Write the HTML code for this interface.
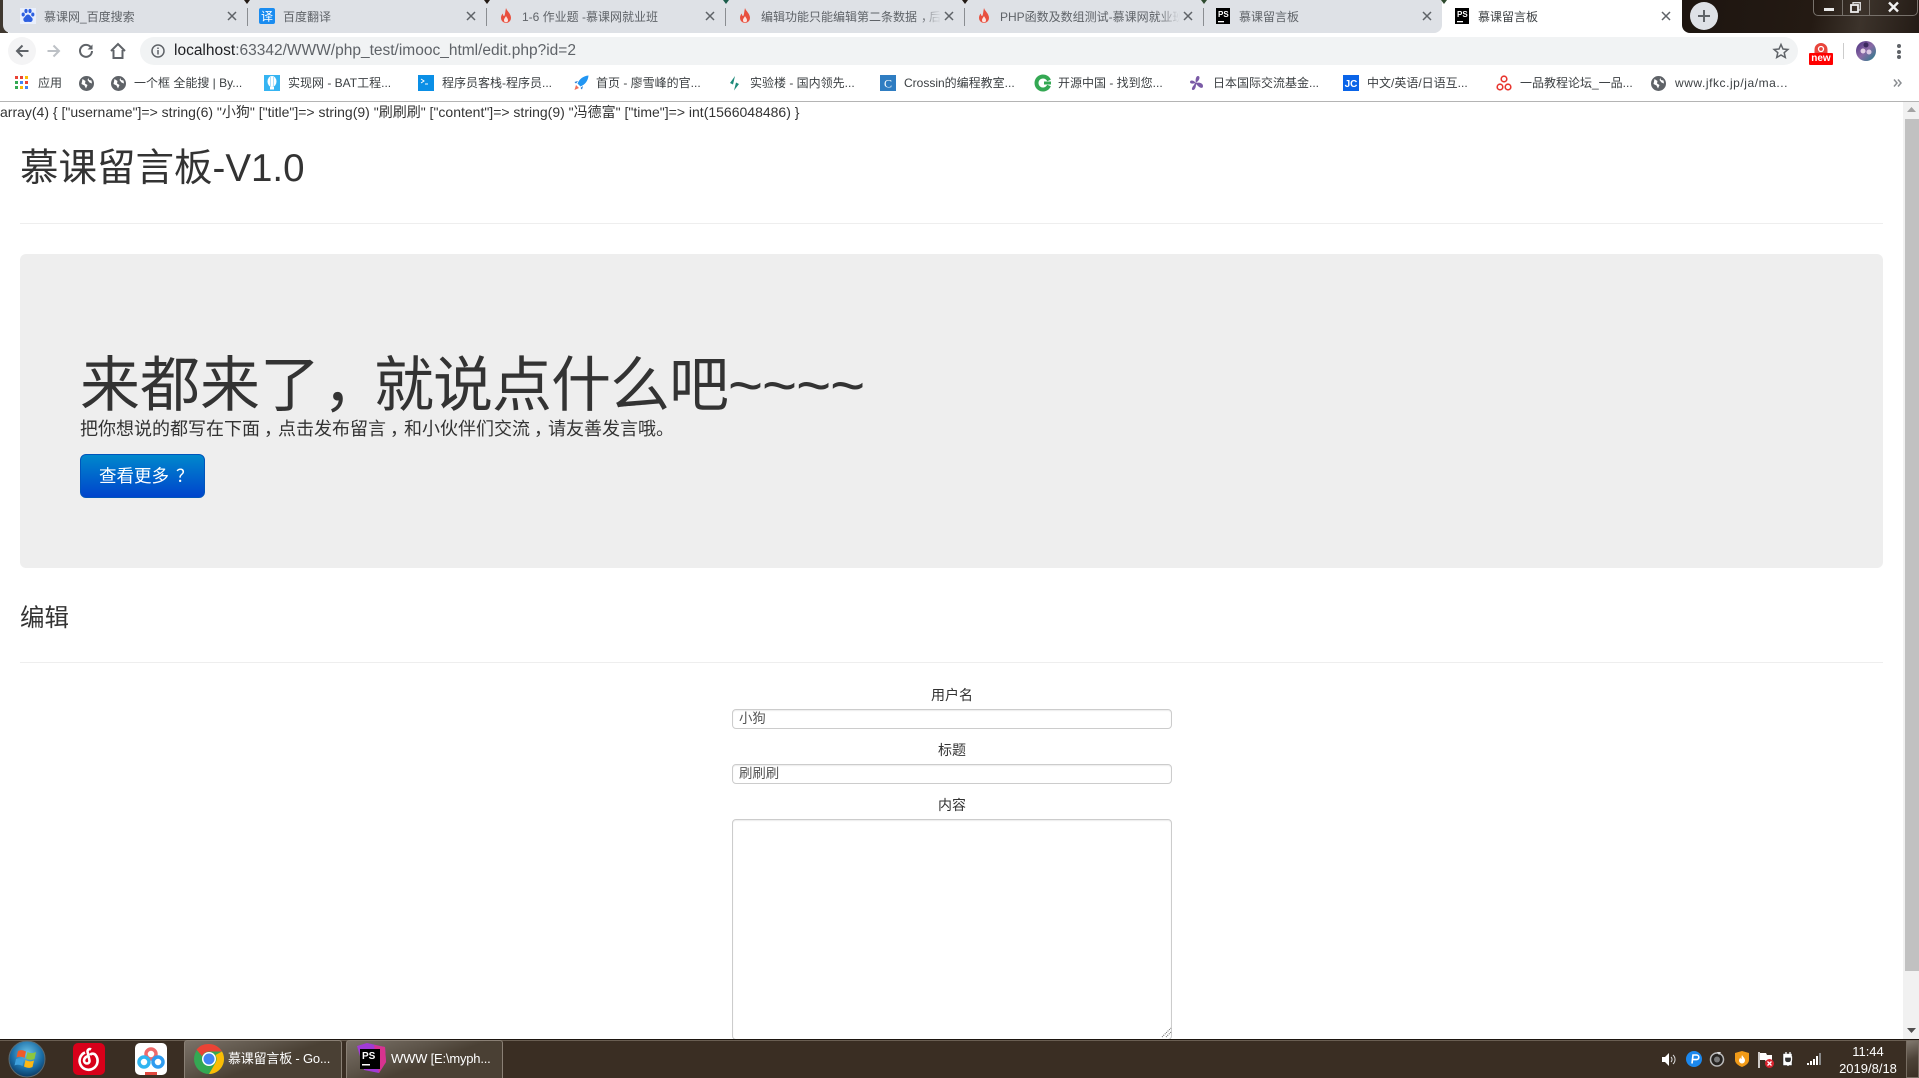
<!DOCTYPE html>
<html lang="zh-CN">
<head>
<meta charset="utf-8">
<title>慕课留言板</title>
<style>
html,body{margin:0;padding:0;width:1919px;height:1078px;overflow:hidden;background:#fff}
body{position:relative;font-family:"Liberation Sans","Noto Sans CJK SC",sans-serif;color:#333}
.a{position:absolute}
.t{position:absolute;white-space:nowrap}
svg{position:absolute;display:block;overflow:visible}
.tab{font-size:12px;color:#5f6368;line-height:16px;top:9px}
.sep{position:absolute;top:8px;width:1px;height:18px;background:#8a8d91}
.tick{position:absolute;top:0;width:0;height:0;border-left:3px solid transparent;border-right:3px solid transparent;border-top:4px solid #221a14}
.bm{font-size:12px;color:#3c4043;line-height:16px;top:75px}
.lab{position:absolute;left:732px;width:440px;text-align:center;font-size:14px;line-height:20px;color:#333}
.inp{position:absolute;left:732px;width:438px;height:18px;border:1px solid #ccc;border-radius:4px;background:#fff;box-shadow:inset 0 1px 1px rgba(0,0,0,.075);font-size:13.400px;line-height:18px;color:#555;text-indent:6px}
.c{position:relative;left:4px}
</style>
</head>
<body>

<!-- Frame / tab strip -->
<div class="a" style="left:0;top:0;width:1919px;height:33px;background:#fff"></div>
<div class="a" style="left:0;top:0;width:8px;height:33px;background:#3f3830"></div>
<div class="a" style="left:3px;top:0;width:1439px;height:33px;background:#dee1e6;border-radius:0 0 8px 8px"></div>
<div class="a" style="left:1442px;top:0;width:240px;height:33px;background:#fff;border-radius:8px 8px 0 0"></div>
<div class="a" style="left:1682px;top:0;width:237px;height:33px;border-radius:0 0 0 8px;background:linear-gradient(100deg,#1d1510 0%,#241a13 55%,#3c332b 75%,#241b15 100%)"></div>

<div class="tick" style="left:244px"></div>
<div class="tick" style="left:484px"></div>
<div class="tick" style="left:723px;border-top-color:#1a5c4a"></div>
<div class="tick" style="left:962px"></div>
<div class="tick" style="left:1201px;border-top-color:#2e4a2e"></div>
<div class="tick" style="left:1441px;border-top-color:#2e4a2e"></div>

<svg style="left:20px;top:8px" width="16" height="16" viewBox="0 0 16 16"><rect width="16" height="16" fill="#e9effc"/><g fill="#2d5fe0"><ellipse cx="3.200" cy="6.500" rx="1.600" ry="2"/><ellipse cx="6" cy="3" rx="1.600" ry="2.100"/><ellipse cx="10" cy="3" rx="1.600" ry="2.100"/><ellipse cx="12.800" cy="6.500" rx="1.600" ry="2"/><path d="M8 6.500c-2 0-2.400 2-4 3.300C2.700 11 3.300 14.300 6 14c1.300-.1 2.700-.1 4 0 2.700.3 3.300-3 2-4.200C10.400 8.500 10 6.500 8 6.500z"/></g></svg>
<div class="t tab" style="left:44px">慕课网_百度搜索</div>
<svg style="left:227px;top:11px" width="10" height="10" viewBox="0 0 10 10"><path d="M1 1l8 8M9 1l-8 8" stroke="#5f6368" stroke-width="1.500"/></svg>
<div class="sep" style="left:247px"></div>

<svg style="left:259px;top:8px" width="16" height="16" viewBox="0 0 16 16"><rect width="16" height="16" rx="2" fill="#1a8cf0"/><text x="8" y="12.500" font-size="12" text-anchor="middle" fill="#fff" font-family="Noto Sans CJK SC">译</text></svg>
<div class="t tab" style="left:283px">百度翻译</div>
<svg style="left:466px;top:11px" width="10" height="10" viewBox="0 0 10 10"><path d="M1 1l8 8M9 1l-8 8" stroke="#5f6368" stroke-width="1.500"/></svg>
<div class="sep" style="left:486px"></div>

<svg style="left:500px;top:8px" width="12" height="16" viewBox="0 0 12 16"><path d="M6 0c.8 3 5 5.500 5 10a5 5 0 0 1-10 0c0-2 .8-3.500 1.800-4.500C3 7 3.300 8 4.300 8 5.300 6 5.200 3 6 0z" fill="#e8503f"/><path d="M6 8c.5 1.500 2 2.500 2 4.200a2 2 0 0 1-4 0C4 10.500 5.500 9.500 6 8z" fill="#fde4df"/></svg>
<div class="t tab" style="left:522px">1-6 作业题 -慕课网就业班</div>
<svg style="left:705px;top:11px" width="10" height="10" viewBox="0 0 10 10"><path d="M1 1l8 8M9 1l-8 8" stroke="#5f6368" stroke-width="1.500"/></svg>
<div class="sep" style="left:725px"></div>

<svg style="left:739px;top:8px" width="12" height="16" viewBox="0 0 12 16"><path d="M6 0c.8 3 5 5.500 5 10a5 5 0 0 1-10 0c0-2 .8-3.500 1.800-4.500C3 7 3.300 8 4.300 8 5.300 6 5.200 3 6 0z" fill="#e8503f"/><path d="M6 8c.5 1.500 2 2.500 2 4.200a2 2 0 0 1-4 0C4 10.500 5.500 9.500 6 8z" fill="#fde4df"/></svg>
<div class="t tab" style="left:761px;width:180px;overflow:hidden;-webkit-mask-image:linear-gradient(90deg,#000 88%,transparent)">编辑功能只能编辑第二条数据<span class="c">，</span>后</div>
<svg style="left:944px;top:11px" width="10" height="10" viewBox="0 0 10 10"><path d="M1 1l8 8M9 1l-8 8" stroke="#5f6368" stroke-width="1.500"/></svg>
<div class="sep" style="left:964px"></div>

<svg style="left:978px;top:8px" width="12" height="16" viewBox="0 0 12 16"><path d="M6 0c.8 3 5 5.500 5 10a5 5 0 0 1-10 0c0-2 .8-3.500 1.800-4.500C3 7 3.300 8 4.300 8 5.300 6 5.200 3 6 0z" fill="#e8503f"/><path d="M6 8c.5 1.500 2 2.500 2 4.200a2 2 0 0 1-4 0C4 10.500 5.500 9.500 6 8z" fill="#fde4df"/></svg>
<div class="t tab" style="left:1000px;width:180px;overflow:hidden;-webkit-mask-image:linear-gradient(90deg,#000 88%,transparent)">PHP函数及数组测试-慕课网就业班</div>
<svg style="left:1183px;top:11px" width="10" height="10" viewBox="0 0 10 10"><path d="M1 1l8 8M9 1l-8 8" stroke="#5f6368" stroke-width="1.500"/></svg>
<div class="sep" style="left:1203px"></div>

<svg style="left:1216px;top:8px" width="14" height="16" viewBox="0 0 14 16"><rect width="14" height="16" fill="#000"/><text x="2" y="9" font-size="8" font-weight="700" fill="#fff" font-family="Liberation Sans">PS</text><rect x="2" y="13" width="6" height="1.300" fill="#fff"/></svg>
<div class="t tab" style="left:1239px">慕课留言板</div>
<svg style="left:1422px;top:11px" width="10" height="10" viewBox="0 0 10 10"><path d="M1 1l8 8M9 1l-8 8" stroke="#5f6368" stroke-width="1.500"/></svg>

<svg style="left:1455px;top:8px" width="14" height="16" viewBox="0 0 14 16"><rect width="14" height="16" fill="#000"/><text x="2" y="9" font-size="8" font-weight="700" fill="#fff" font-family="Liberation Sans">PS</text><rect x="2" y="13" width="6" height="1.300" fill="#fff"/></svg>
<div class="t tab" style="left:1478px;color:#3c4043">慕课留言板</div>
<svg style="left:1661px;top:11px" width="10" height="10" viewBox="0 0 10 10"><path d="M1 1l8 8M9 1l-8 8" stroke="#5f6368" stroke-width="1.500"/></svg>

<!-- New tab -->
<div class="a" style="left:1690px;top:2px;width:28px;height:28px;border-radius:50%;background:#dee1e6"></div>
<svg style="left:1697px;top:9px" width="14" height="14" viewBox="0 0 14 14"><path d="M7 1v12M1 7h12" stroke="#5f6368" stroke-width="2"/></svg>

<!-- Window controls -->
<div class="a" style="left:1813px;top:-2px;width:105px;height:18px;border:1px solid #77716b;border-radius:0 0 5px 5px;box-sizing:border-box"></div>
<div class="a" style="left:1842px;top:0;width:1px;height:15px;background:#77716b"></div>
<div class="a" style="left:1869px;top:0;width:1px;height:15px;background:#77716b"></div>
<div class="a" style="left:1824px;top:8px;width:10px;height:3px;background:#e8e8e8"></div>
<svg style="left:1850px;top:2px" width="11" height="11" viewBox="0 0 11 11"><path d="M3 2V.7h7.300V8H8" fill="none" stroke="#ddd" stroke-width="1.300"/><rect x="1" y="3" width="7" height="7" fill="none" stroke="#eee" stroke-width="1.800"/></svg>
<svg style="left:1888px;top:2px" width="11" height="10" viewBox="0 0 11 10"><path d="M1 .5l9 9M10 .5l-9 9" stroke="#f2f2f2" stroke-width="2.400"/></svg>

<!-- Toolbar -->
<div class="a" style="left:0;top:33px;width:1919px;height:68px;background:#fff"></div>
<div class="a" style="left:8px;top:37px;width:28px;height:28px;border-radius:50%;background:#f4f4f5"></div>
<svg style="left:15px;top:44px" width="14" height="14" viewBox="0 0 14 14"><path d="M13.500 7H2M7.500 1.500L2 7l5.500 5.500" fill="none" stroke="#5f6368" stroke-width="2"/></svg>
<svg style="left:47px;top:44px" width="14" height="14" viewBox="0 0 14 14"><path d="M.5 7H12M6.500 1.500L12 7l-5.500 5.500" fill="none" stroke="#bdc1c6" stroke-width="2"/></svg>
<svg style="left:79px;top:44px" width="14" height="14" viewBox="0 0 14 14"><path d="M12 3.500A6 6 0 1 0 13 7" fill="none" stroke="#5f6368" stroke-width="2"/><path d="M13.500 .5v5h-5z" fill="#5f6368"/></svg>
<svg style="left:110px;top:43px" width="16" height="16" viewBox="0 0 16 16"><path d="M1 8l7-7 7 7M3.500 7v8h9V7" fill="none" stroke="#5f6368" stroke-width="2"/></svg>
<div class="a" style="left:140px;top:37px;width:1658px;height:28px;border-radius:14px;background:#f1f3f4"></div>
<svg style="left:151px;top:44px" width="14" height="14" viewBox="0 0 14 14"><circle cx="7" cy="7" r="6" fill="none" stroke="#5f6368" stroke-width="1.500"/><path d="M7 6v4.500M7 3.500v1.500" stroke="#5f6368" stroke-width="1.500"/></svg>
<div class="t" style="left:174px;top:41px;font-size:15.500px;line-height:20px;color:#5f6368"><span style="color:#202124">localhost</span>:63342/WWW/php_test/imooc_html/edit.php?id=2</div>
<svg style="left:1773px;top:43px" width="16" height="16" viewBox="0 0 16 16"><path d="M8 1.500l2 4.500 4.900.500-3.700 3.200 1.100 4.800L8 12l-4.300 2.500 1.100-4.800L1.100 6.500 6 6z" fill="none" stroke="#5f6368" stroke-width="1.500"/></svg>
<svg style="left:1809px;top:42px" width="24" height="23" viewBox="0 0 24 23"><path d="M12 1a6.500 6.500 0 0 1 6.500 6.500V11h-13V7.500A6.500 6.500 0 0 1 12 1z" fill="#e8453c"/><circle cx="12" cy="7" r="2.500" fill="none" stroke="#fff" stroke-width="1.300"/><rect y="11" width="24" height="12" rx="1" fill="#f00"/></svg>
<div class="t" style="left:1809px;top:53px;width:24px;text-align:center;font-size:10px;font-weight:700;line-height:12px;color:#fff">new</div>
<div class="a" style="left:1843px;top:43px;width:1px;height:16px;background:#ccc"></div>
<svg style="left:1856px;top:41px" width="20" height="20" viewBox="0 0 20 20"><defs><linearGradient id="av" x1="0" y1="0" x2="1" y2="1"><stop offset="0" stop-color="#4a2f7e"/><stop offset=".5" stop-color="#8a6aa6"/><stop offset="1" stop-color="#1e7e86"/></linearGradient></defs><circle cx="10" cy="10" r="10" fill="url(#av)"/><circle cx="7" cy="10" r="2.500" fill="#e4d2e6"/><circle cx="13" cy="11" r="2.500" fill="#dcc8e4"/><circle cx="10" cy="4" r="2.500" fill="#3b2a5e"/></svg>
<div class="a" style="left:1897px;top:44px;width:4px;height:4px;border-radius:50%;background:#5f6368"></div>
<div class="a" style="left:1897px;top:49.500px;width:4px;height:4px;border-radius:50%;background:#5f6368"></div>
<div class="a" style="left:1897px;top:55px;width:4px;height:4px;border-radius:50%;background:#5f6368"></div>

<!-- Bookmarks -->
<svg style="left:15px;top:76px" width="13" height="13" viewBox="0 0 13 13"><rect x="0" y="0" width="3" height="3" fill="#ea4335"/><rect x="5" y="0" width="3" height="3" fill="#ea4335"/><rect x="10" y="0" width="3" height="3" fill="#fbbc05"/><rect x="0" y="5" width="3" height="3" fill="#34a853"/><rect x="5" y="5" width="3" height="3" fill="#4285f4"/><rect x="10" y="5" width="3" height="3" fill="#ea4335"/><rect x="0" y="10" width="3" height="3" fill="#34a853"/><rect x="5" y="10" width="3" height="3" fill="#fbbc05"/><rect x="10" y="10" width="3" height="3" fill="#4285f4"/></svg>
<div class="t bm" style="left:38px">应用</div>

<svg style="left:79px;top:76px" width="15" height="15" viewBox="0 0 15 15"><circle cx="7.500" cy="7.500" r="7.500" fill="#5f6368"/><path d="M3.500 3l3 2L6 7.500 8.500 9 7 12.500l-1.500-3L2.500 8zM9.500 2l.5 2 2.500.5.500 3-2.500-1L8.500 4z" fill="#fff"/></svg>
<svg style="left:111px;top:76px" width="15" height="15" viewBox="0 0 15 15"><circle cx="7.500" cy="7.500" r="7.500" fill="#5f6368"/><path d="M3.500 3l3 2L6 7.500 8.500 9 7 12.500l-1.500-3L2.500 8zM9.500 2l.5 2 2.500.5.500 3-2.500-1L8.500 4z" fill="#fff"/></svg>
<div class="t bm" style="left:134px">一个框 全能搜 | By...</div>

<svg style="left:264px;top:75px" width="16" height="16" viewBox="0 0 16 16"><rect width="16" height="16" fill="#35b4f2"/><ellipse cx="8" cy="6.500" rx="4.500" ry="5.500" fill="#fff"/><path d="M6 12h4v2.500H6z" fill="#fff"/><path d="M6.500 2v9M9.500 2v9" stroke="#8fd4f7" stroke-width=".7"/></svg>
<div class="t bm" style="left:288px">实现网 - BAT工程...</div>

<svg style="left:418px;top:75px" width="16" height="16" viewBox="0 0 16 16"><rect width="16" height="16" fill="#0a8fe6"/><path d="M3 4l3 2-3 2M7 9h3" fill="none" stroke="#fff" stroke-width="1"/></svg>
<div class="t bm" style="left:442px">程序员客栈-程序员...</div>

<svg style="left:573px;top:75px" width="16" height="16" viewBox="0 0 16 16"><path d="M15.500.5C10 1 6.500 4 4.500 8.500l3 3C12 9.500 15 6 15.500.5z" fill="#2196f3"/><path d="M5 6L1.500 7l1.500 1.500zM10 11l-1 3.500-1.500-1.500z" fill="#1976d2"/><path d="M3 10l3 3-4.500 2z" fill="#f0705a"/></svg>
<div class="t bm" style="left:596px">首页 - 廖雪峰的官...</div>

<svg style="left:729px;top:76px" width="11" height="15" viewBox="0 0 11 15"><path d="M6 0L1 7l3 1.500zM5 14.500L10 8 7 6.500z" fill="#1e8a7a"/></svg>
<div class="t bm" style="left:750px">实验楼 - 国内领先...</div>

<svg style="left:880px;top:75px" width="16" height="16" viewBox="0 0 16 16"><rect width="16" height="16" fill="#2f7dc2"/><text x="8" y="12.500" font-size="12" text-anchor="middle" fill="#fff" font-family="Liberation Serif">C</text></svg>
<div class="t bm" style="left:904px">Crossin的编程教室...</div>

<svg style="left:1035px;top:75px" width="16" height="16" viewBox="0 0 16 16"><path d="M14 5.500A6.500 6.500 0 1 0 14 10.500" fill="none" stroke="#34a853" stroke-width="4"/><rect x="9" y="6.500" width="7" height="3" fill="#34a853"/></svg>
<div class="t bm" style="left:1058px">开源中国 - 找到您...</div>

<svg style="left:1189px;top:75px" width="15" height="16" viewBox="0 0 15 16"><path d="M9 1c2 0 2 3 0 5L7 8c3-1 7 0 7 3s-3 2-5 0L7 9c0 3-1 6-3 6s-1-3 1-5L6 8C4 9 1 9 1 7s3-2 5 0l1 1c-1-3 0-7 2-7z" fill="#7a5aa6"/></svg>
<div class="t bm" style="left:1213px">日本国际交流基金...</div>

<svg style="left:1343px;top:75px" width="16" height="16" viewBox="0 0 16 16"><rect width="16" height="16" fill="#0a64e8"/><text x="8" y="12" font-size="10" font-weight="700" text-anchor="middle" fill="#fff" font-family="Liberation Sans">JC</text></svg>
<div class="t bm" style="left:1367px">中文/英语/日语互...</div>

<svg style="left:1496px;top:75px" width="16" height="16" viewBox="0 0 16 16"><g fill="none" stroke="#e8362f" stroke-width="1.600"><circle cx="8" cy="4" r="2.800"/><circle cx="4" cy="12" r="2.800"/><circle cx="12" cy="12" r="2.800"/></g></svg>
<div class="t bm" style="left:1520px">一品教程论坛_一品...</div>

<svg style="left:1651px;top:76px" width="15" height="15" viewBox="0 0 15 15"><circle cx="7.500" cy="7.500" r="7.500" fill="#5f6368"/><path d="M3.500 3l3 2L6 7.500 8.500 9 7 12.500l-1.500-3L2.500 8zM9.500 2l.5 2 2.500.5.500 3-2.500-1L8.500 4z" fill="#fff"/></svg>
<div class="t bm" style="left:1675px;letter-spacing:.55px">www.jfkc.jp/ja/ma...</div>

<svg style="left:1893px;top:79px" width="9" height="8" viewBox="0 0 9 8"><path d="M1 .5L4 4 1 7.500M5 .5L8 4 5 7.500" fill="none" stroke="#8a8d91" stroke-width="1.500"/></svg>

<div class="a" style="left:0;top:101px;width:1919px;height:1px;background:#b4b4b4"></div>

<!-- Page content -->
<div class="t" style="left:0;top:104px;font-size:14px;line-height:17px;color:#333">array(4) { ["username"]=&gt; string(6) "小狗" ["title"]=&gt; string(9) "刷刷刷" ["content"]=&gt; string(9) "冯德富" ["time"]=&gt; int(1566048486) }</div>

<div class="t" style="left:20px;top:148px;font-size:38.500px;line-height:42px;color:#333">慕课留言板-V1.0</div>
<div class="a" style="left:20px;top:223px;width:1863px;height:1px;background:#eee"></div>

<div class="a" style="left:20px;top:254px;width:1863px;height:314px;border-radius:6px;background:#eee"></div>
<div class="t" style="left:80px;top:352px;font-size:60px;line-height:68px;color:#333">来都来了</div>
<div class="t" style="left:323px;top:352px;font-size:60px;line-height:68px;color:#333">，</div>
<div class="t" style="left:374px;top:352px;font-size:60px;line-height:68px;color:#333;letter-spacing:-1px">就说点什么吧</div>
<div class="t" style="left:728px;top:352px;font-size:60px;line-height:68px;color:#333;letter-spacing:-1px">~~~~</div>
<div class="t" style="left:80px;top:416px;font-size:18px;line-height:27px;color:#333">把你想说的都写在下面<span class="c">，</span>点击发布留言<span class="c">，</span>和小伙伴们交流<span class="c">，</span>请友善发言哦。</div>
<div class="a" style="left:80px;top:454px;width:125px;height:44px;border-radius:6px;box-sizing:border-box;border:1px solid #0055bb;background:linear-gradient(#0088cc,#0044cc)"></div>
<div class="t" style="left:99px;top:464px;font-size:17.500px;line-height:24px;color:#fff">查看更多<span style="position:relative;left:7px">？</span></div>

<div class="t" style="left:20px;top:602px;font-size:24.500px;line-height:34px;color:#333">编辑</div>
<div class="a" style="left:20px;top:662px;width:1863px;height:1px;background:#eee"></div>

<div class="lab" style="top:685px">用户名</div>
<div class="inp" style="top:709px">小狗</div>
<div class="lab" style="top:740px">标题</div>
<div class="inp" style="top:764px">刷刷刷</div>
<div class="lab" style="top:795px">内容</div>
<div class="a" style="left:732px;top:819px;width:438px;height:219px;border:1px solid #ccc;border-radius:4px;background:#fff;box-shadow:inset 0 1px 1px rgba(0,0,0,.075)"></div>
<svg style="left:1162px;top:1028px" width="9" height="9" viewBox="0 0 9 9"><path d="M0 9l9-9M4 9l5-5" stroke="#666" stroke-width="1" stroke-dasharray="1 1"/></svg>

<!-- Scrollbar -->
<div class="a" style="left:1903px;top:102px;width:16px;height:937px;background:#f1f1f1"></div>
<svg style="left:1907px;top:107px" width="9" height="5" viewBox="0 0 9 5"><path d="M4.500 0L9 5H0z" fill="#a3a3a3"/></svg>
<div class="a" style="left:1905px;top:119px;width:14px;height:852px;background:#c1c1c1"></div>
<svg style="left:1907px;top:1028px" width="9" height="5" viewBox="0 0 9 5"><path d="M0 0h9L4.500 5z" fill="#505050"/></svg>

<!-- Taskbar -->
<div class="a" style="left:0;top:1039px;width:1919px;height:39px;background:#3a2e23;border-top:1px solid #1c150f;box-sizing:border-box"></div>
<div class="a" style="left:0;top:1040px;width:1919px;height:1px;background:#6a5f53"></div>

<svg style="left:8px;top:1040px" width="38" height="38" viewBox="0 0 38 38"><defs><radialGradient id="orb" cx=".5" cy=".35" r=".7"><stop offset="0" stop-color="#6cc3e8"/><stop offset=".6" stop-color="#1a6da6"/><stop offset="1" stop-color="#0a2f55"/></radialGradient></defs><circle cx="19" cy="19" r="18" fill="url(#orb)" stroke="#5c6a70" stroke-width="1"/><path d="M10 11c3-1.500 5-1 8 .5L16.500 18c-2.500-1.500-5-1.500-8-.5z" fill="#f05a28"/><path d="M19.500 12c3 1.500 5 1.500 8.500 0l-1.500 7c-3 1.300-5.500 1-8.500-.5z" fill="#8cc63f"/><path d="M8 19c3-1 5-1 8 .5L14.500 26c-3-1.500-5-1.500-8-.5z" fill="#3ea0dc"/><path d="M17.500 20c3 1.500 5.500 1.800 8.500.5L24.500 27c-3 1.500-5.500 1-8.500-.5z" fill="#fdb813"/></svg>

<svg style="left:73px;top:1043px" width="32" height="32" viewBox="0 0 32 32"><rect width="32" height="32" rx="5" fill="#d8001a"/><path d="M18 6.500c-1.500-1-3.500 0-3.500 2l2 9c.3 1.700-1 3-2.500 3a3 3 0 0 1-3-3c0-2 1.500-3.500 4-4.500M12 9.500a9 9 0 1 0 10.500 2.500c-1.500-2-4.500-1.500-5.500 0" fill="none" stroke="#fff" stroke-width="2.600"/></svg>

<svg style="left:135px;top:1043px" width="32" height="32" viewBox="0 0 32 32"><rect width="32" height="32" rx="5" fill="#fff"/><circle cx="16" cy="11" r="5" fill="none" stroke="#f06a6a" stroke-width="3.500"/><circle cx="9" cy="19" r="5" fill="none" stroke="#2fb5f0" stroke-width="3.500"/><circle cx="23" cy="19" r="5" fill="none" stroke="#2f9cf0" stroke-width="3.500"/><rect x="10" y="29" width="12" height="3" fill="#e0483e"/></svg>

<div class="a" style="left:184px;top:1040px;width:158px;height:38px;box-sizing:border-box;border:1px solid #8a8075;border-bottom:0;border-radius:3px 3px 0 0;background:linear-gradient(160deg,#7a7167 0%,#5d5449 35%,#4a4034 55%,#4a4034 100%)"></div>
<svg style="left:194px;top:1044px" width="30" height="30" viewBox="0 0 30 30"><circle cx="15" cy="15" r="15" fill="#34a853"/><path d="M15 0a15 15 0 0 1 13 7.500H15a7.500 7.500 0 0 0-7 4.800L2.500 5.500A15 15 0 0 1 15 0z" fill="#ea4335"/><path d="M28 7.500A15 15 0 0 1 15 30l6.500-11.300A7.500 7.500 0 0 0 21.500 11z" fill="#fbbc05"/><circle cx="15" cy="15" r="7" fill="#fff"/><circle cx="15" cy="15" r="5.500" fill="#4285f4"/></svg>
<div class="t" style="left:228px;top:1050px;font-size:13px;line-height:18px;color:#fff;letter-spacing:-.2px">慕课留言板 - Go...</div>

<div class="a" style="left:346px;top:1040px;width:157px;height:38px;box-sizing:border-box;border:1px solid #8a8075;border-bottom:0;border-radius:3px 3px 0 0;background:linear-gradient(160deg,#7a7167 0%,#5d5449 35%,#4a4034 55%,#4a4034 100%)"></div>
<svg style="left:354px;top:1043px" width="33" height="32" viewBox="0 0 33 32"><path d="M3 3l10-3 18 4 1 15-7 11-15-3z" fill="#a13bd6"/><path d="M20 2l11 2 1 15-7 11z" fill="#d8338f"/><rect x="6" y="6" width="20" height="20" fill="#000"/><text x="8" y="16" font-size="10" font-weight="700" fill="#fff" font-family="Liberation Sans">PS</text><rect x="8" y="21" width="8" height="1.500" fill="#fff"/></svg>
<div class="t" style="left:391px;top:1050px;font-size:13px;line-height:18px;color:#fff;letter-spacing:-.2px">WWW [E:\myph...</div>

<!-- Tray -->
<svg style="left:1662px;top:1053px" width="15" height="13" viewBox="0 0 15 13"><path d="M0 4h3l4-4v13L3 9H0z" fill="#fff"/><path d="M9 4a3.500 3.500 0 0 1 0 5M11 2a6 6 0 0 1 0 9" fill="none" stroke="#ddd" stroke-width="1"/></svg>
<svg style="left:1686px;top:1051px" width="16" height="16" viewBox="0 0 16 16"><circle cx="8" cy="8" r="8" fill="#1b88ee"/><path d="M6 12.500L7 4h3.500a2.300 2.300 0 0 1 0 4.600H7" fill="none" stroke="#fff" stroke-width="1.600"/></svg>
<svg style="left:1709px;top:1051px" width="16" height="16" viewBox="0 0 16 16"><circle cx="8" cy="8.500" r="6.500" fill="#262320" stroke="#bbb" stroke-width="1.500"/><circle cx="8" cy="8.500" r="3" fill="#7a7a7a"/><path d="M8 1h4l-2 3z" fill="#ddd"/></svg>
<svg style="left:1735px;top:1051px" width="14" height="16" viewBox="0 0 14 16"><path d="M0 2l7-2 7 2v7c0 3-3 5.500-7 7-4-1.500-7-4-7-7z" fill="#f09a18"/><path d="M7 4c1 2 3 3 3 5.500a3 3 0 0 1-6 0C4 8 5 7 5.500 6.500 5.500 7.500 6 8 6.500 8 6.500 6.500 6.500 5.500 7 4z" fill="#fff"/></svg>
<svg style="left:1758px;top:1052px" width="16" height="16" viewBox="0 0 16 16"><path d="M1 0v16" stroke="#fff" stroke-width="1.500"/><path d="M2 1h6l1 2h5v7H8L7 8H2z" fill="#fff"/><circle cx="11.500" cy="11.500" r="4.500" fill="#d9232e"/><path d="M9.500 9.500l4 4M13.500 9.500l-4 4" stroke="#fff" stroke-width="1.300"/></svg>
<svg style="left:1782px;top:1052px" width="14" height="15" viewBox="0 0 14 15"><path d="M1 1.500h9v12H1z" fill="#fff" stroke="#222" stroke-width=".5"/><path d="M4 0v5M8 0v5M2.500 5h7v3a3.500 3 0 0 1-7 0zM6 10v4" stroke="#fff" fill="#333" stroke-width="1.300"/></svg>
<svg style="left:1807px;top:1053px" width="15" height="12" viewBox="0 0 15 12"><rect x="0" y="10" width="2" height="2" fill="#fff"/><rect x="3" y="8" width="2" height="4" fill="#fff"/><rect x="6" y="6" width="2" height="6" fill="#fff"/><rect x="9" y="3" width="2" height="9" fill="#fff"/><rect x="12" y="0" width="2" height="12" fill="#888"/></svg>

<div class="t" style="left:1838px;top:1044px;width:60px;text-align:center;font-size:13px;line-height:16px;color:#fff">11:44</div>
<div class="t" style="left:1838px;top:1061px;width:60px;text-align:center;font-size:13px;line-height:16px;color:#fff">2019/8/18</div>

<div class="a" style="left:1906px;top:1040px;width:13px;height:38px;box-sizing:border-box;border:1px solid #776d62;background:linear-gradient(160deg,#82796f 0%,#4d4338 50%,#3b2f24 100%)"></div>

</body>
</html>
